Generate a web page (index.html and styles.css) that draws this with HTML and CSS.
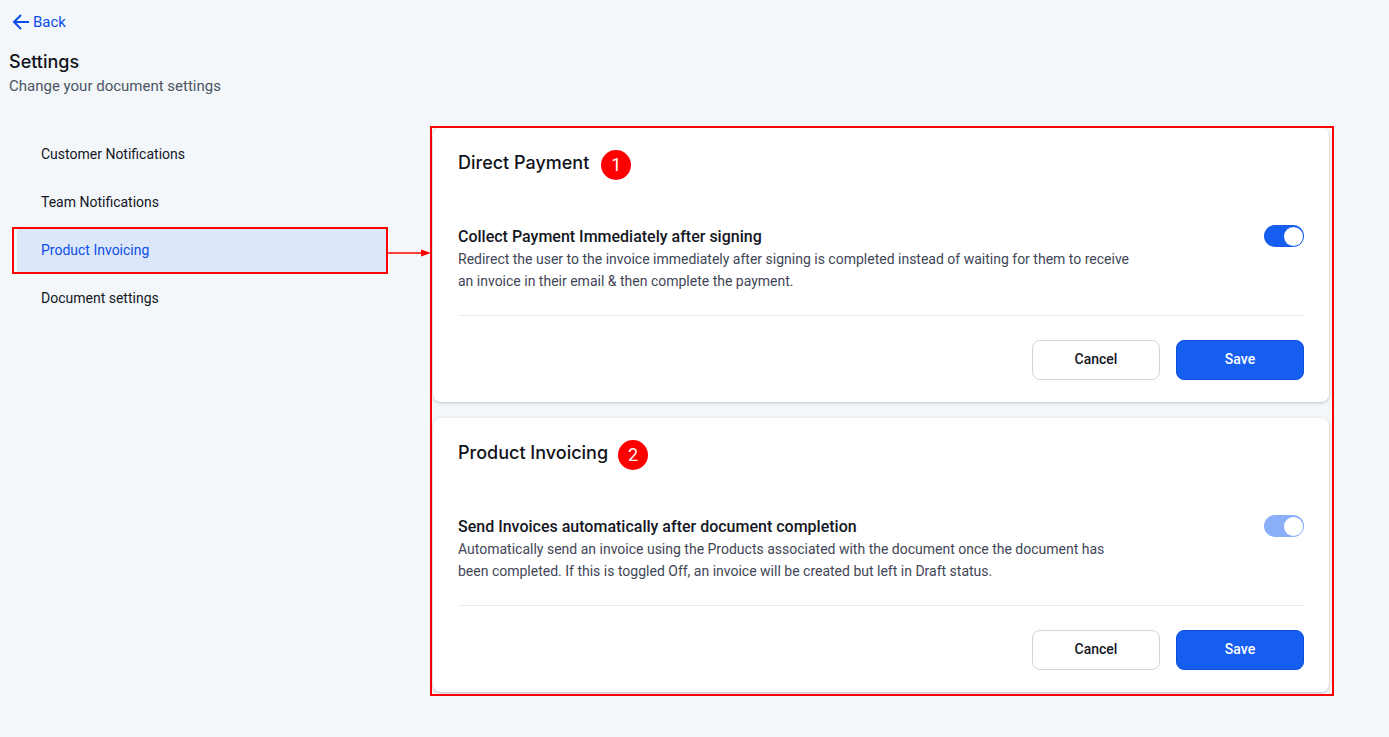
FILE: index.html
```html
<!DOCTYPE html>
<html lang="en">
<head>
    <meta charset="UTF-8">
    <meta name="viewport" content="width=device-width, initial-scale=1.0">
    <title>Settings</title>
    <link rel="stylesheet" href="styles.css">
</head>
<body>
    <a class="back-link" href="#">
        <svg class="back-icon" width="18" height="18" viewBox="0 0 18 18" fill="none">
            <path d="M17 9H2.500M9 2L2 9l7 7" stroke="#0b4de8" stroke-width="2"/>
        </svg>
        Back
    </a>

    <div class="page-header">
        <h1>Settings</h1>
        <p>Change your document settings</p>
    </div>

    <div class="settings-layout">
        <nav class="side-nav">
            <a class="nav-item" href="#">Customer Notifications</a>
            <a class="nav-item" href="#">Team Notifications</a>
            <a class="nav-item active" href="#">
                Product Invoicing
                <svg class="nav-arrow" width="44" height="10" viewBox="0 0 44 10">
                    <path d="M0 5H34" stroke="#f00" stroke-width="1.300"/>
                    <path d="M33 1.500L43 5L33 8.500z" fill="#f00"/>
                </svg>
            </a>
            <a class="nav-item" href="#">Document settings</a>
        </nav>

        <div class="cards-frame">
            <section class="card">
                <div class="card-title">
                    <h2>Direct Payment</h2>
                    <span class="step-badge first">1</span>
                </div>
                <div class="setting-row">
                    <div class="setting-text">
                        <h3>Collect Payment Immediately after signing</h3>
                        <p>Redirect the user to the invoice immediately after signing is completed instead of waiting for them to receive an invoice in their email &amp; then complete the payment.</p>
                    </div>
                    <span class="toggle"></span>
                </div>
                <div class="card-actions">
                    <button class="btn btn-cancel">Cancel</button>
                    <button class="btn btn-save">Save</button>
                </div>
            </section>

            <section class="card">
                <div class="card-title">
                    <h2>Product Invoicing</h2>
                    <span class="step-badge">2</span>
                </div>
                <div class="setting-row">
                    <div class="setting-text">
                        <h3>Send Invoices automatically after document completion</h3>
                        <p>Automatically send an invoice using the Products associated with the document once the document has been completed. If this is toggled Off, an invoice will be created but left in Draft status.</p>
                    </div>
                    <span class="toggle disabled"></span>
                </div>
                <div class="card-actions">
                    <button class="btn btn-cancel">Cancel</button>
                    <button class="btn btn-save">Save</button>
                </div>
            </section>
        </div>
    </div>
</body>
</html>
```

FILE: styles.css
```css
* {
    box-sizing: border-box;
}

body {
    margin: 0;
    height: 737px;
    padding: 12px 55px 0 9px;
    background-color: #f3f7fa;
    font-family: Roboto, "Liberation Sans", sans-serif;
    color: #14161f;
    overflow: hidden;
}

a {
    text-decoration: none;
}

.back-link {
    display: flex;
    align-items: center;
    gap: 3px;
    height: 20px;
    margin-left: 3px;
    font-size: 15px;
    color: #0b4de8;
}

.page-header {
    margin-top: 18px;
    height: 76px;
}

.page-header h1 {
    margin: 0;
    font-family: Inter, sans-serif;
    font-size: 18px;
    font-weight: 500;
    line-height: 24px;
    color: #11131a;
}

.page-header p {
    margin: 2px 0 0;
    font-size: 15px;
    line-height: 20px;
    color: #4b5563;
}

.settings-layout {
    display: flex;
    align-items: flex-start;
    justify-content: space-between;
}

.side-nav {
    width: 369px;
    margin-left: 8px;
    padding-top: 4px;
    display: flex;
    flex-direction: column;
}

.nav-item {
    position: relative;
    display: flex;
    align-items: center;
    height: 44px;
    margin: 2px 0;
    padding-left: 24px;
    font-size: 14px;
    color: #14161f;
}

.nav-item.active {
    background-color: #dce8f9;
    color: #0b4de8;
}

.nav-item.active::after {
    content: "";
    position: absolute;
    top: -1px;
    left: -5px;
    right: -2px;
    bottom: -2px;
    border: 2px solid #f00;
}

.nav-arrow {
    position: absolute;
    top: 20px;
    right: -46px;
}

.cards-frame {
    width: 904px;
    height: 570px;
    padding: 0 3px 0 1px;
    border: 2px solid #f00;
    display: flex;
    flex-direction: column;
    gap: 16px;
}

.card {
    height: 274px;
    padding: 22px 25px 0;
    background-color: #fff;
    border-radius: 8px;
    box-shadow: 0 1px 3px rgba(60, 70, 90, 0.3);
}

.card-title {
    display: flex;
    align-items: flex-start;
    gap: 10px;
    height: 30px;
}

.card-title h2 {
    margin: 0;
    font-family: Inter, sans-serif;
    font-size: 18px;
    font-weight: 500;
    line-height: 26px;
    color: #11131a;
}

.step-badge {
    width: 30px;
    height: 30px;
    border-radius: 50%;
    background-color: #f00;
    color: #fff;
    font-size: 18px;
    line-height: 30px;
    text-align: center;
}

.step-badge.first {
    margin-left: 2px;
}

.setting-row {
    display: flex;
    justify-content: space-between;
    align-items: flex-start;
    margin-top: 45px;
    height: 91px;
    border-bottom: 1px solid #e8eaee;
}

.setting-text {
    width: 680px;
    padding-top: 1px;
}

.setting-text h3 {
    margin: 0;
    font-size: 16px;
    font-weight: 500;
    line-height: 22px;
    color: #14161f;
}

.setting-text p {
    margin: 0;
    font-size: 14px;
    line-height: 22px;
    color: #3f4656;
}

.toggle {
    position: relative;
    width: 40px;
    height: 22px;
    border-radius: 11px;
    background-color: #155eef;
}

.toggle::after {
    content: "";
    position: absolute;
    top: 1.5px;
    right: 1.5px;
    width: 19px;
    height: 19px;
    border-radius: 50%;
    background-color: #fff;
}

.toggle.disabled {
    background-color: #8aaef7;
}

.card-actions {
    display: flex;
    justify-content: flex-end;
    gap: 16px;
    margin-top: 24px;
}

.btn {
    width: 128px;
    height: 40px;
    padding: 0 0 2px;
    border-radius: 8px;
    font-family: Roboto, sans-serif;
    font-size: 14px;
    font-weight: 500;
    cursor: pointer;
}

.btn-cancel {
    background-color: #fff;
    border: 1px solid #d0d5dd;
    color: #14161f;
}

.btn-save {
    background-color: #155eef;
    border: 1px solid #0f4fd8;
    color: #fff;
}
```
